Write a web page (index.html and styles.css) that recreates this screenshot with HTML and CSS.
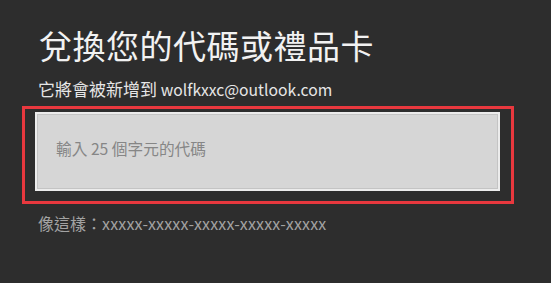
FILE: index.html
```html
<!DOCTYPE html>
<html lang="zh-Hant">
<head>
<meta charset="utf-8">
<link rel="stylesheet" href="styles.css">
</head>
<body>
<main class="page">
  <h1 class="title">兌換您的代碼或禮品卡</h1>
  <p class="sub">它將會被新增到 <span class="email">wolfkxxc@outlook.com</span></p>
  <div class="highlight">
    <div class="field"><span class="placeholder">輸入 25 個字元的代碼</span></div>
  </div>
  <p class="example">像這樣：<span class="mask">xxxxx-xxxxx-xxxxx-xxxxx-xxxxx</span></p>
</main>
</body>
</html>
```
FILE: styles.css
```css
html, body {
  margin: 0;
  padding: 0;
  background: #2d2d2d;
}
body {
  width: 551px;
  height: 283px;
  overflow: hidden;
  font-family: "Noto Sans CJK TC", "Noto Sans", sans-serif;
}
.page {
  padding: 24px 0 0 22px;
  display: flex;
  flex-direction: column;
}
.title {
  margin: 0 0 0 17px;
  font-size: 33px;
  font-weight: 400;
  letter-spacing: 0.5px;
  line-height: 42px;
  color: #f2f2f2;
}
.sub {
  margin: 12px 0 0 16px;
  font-size: 17px;
  line-height: 22px;
  color: #e6e6e6;
}
.email {
  font-size: 15.7px;
}
.highlight {
  margin-top: 5px;
  width: 492px;
  height: 98px;
  border: 3px solid #e8383e;
  padding: 3px 0 0 10px;
  box-sizing: border-box;
}
.field {
  width: 465px;
  height: 79px;
  border: 2px solid #ececec;
  outline: 1px solid #c4c4c4;
  outline-offset: -3px;
  background: #d6d6d6;
  display: flex;
  align-items: center;
  padding: 0 0 7px 19px;
  box-sizing: border-box;
}
.placeholder {
  font-size: 15.7px;
  color: #868686;
}
.example {
  margin: 8px 0 0 16px;
  font-size: 16px;
  line-height: 22px;
  color: #a3a3a3;
}
.mask {
  letter-spacing: 0.17px;
}
```
